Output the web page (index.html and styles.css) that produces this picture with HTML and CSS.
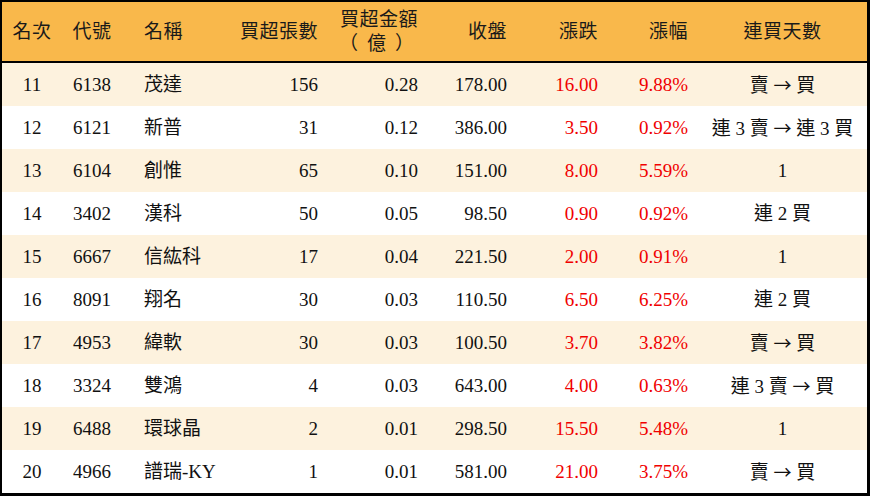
FILE: index.html
```html
<!DOCTYPE html>
<html lang="zh-Hant">
<head>
<meta charset="utf-8">
<link rel="stylesheet" href="styles.css">
</head>
<body>
<table class="rank">
  <colgroup>
    <col class="c1"><col class="c2"><col class="c3"><col class="c4"><col class="c5"><col class="c6"><col class="c7"><col class="c8"><col class="c9">
  </colgroup>
  <thead>
    <tr>
      <th class="ctr">名次</th>
      <th class="ctr">代號</th>
      <th class="lft">名稱</th>
      <th class="rgt">買超張數</th>
      <th class="rgt two">買超金額<br><span class="unit">（億）</span></th>
      <th class="rgt">收盤</th>
      <th class="rgt">漲跌</th>
      <th class="rgt">漲幅</th>
      <th class="ctr">連買天數</th>
    </tr>
  </thead>
  <tbody>
    <tr><td class="ctr">11</td><td class="ctr">6138</td><td class="lft">茂達</td><td class="rgt">156</td><td class="rgt">0.28</td><td class="rgt">178.00</td><td class="rgt up">16.00</td><td class="rgt up">9.88%</td><td class="ctr">賣 <span class="arr">→</span> 買</td></tr>
    <tr><td class="ctr">12</td><td class="ctr">6121</td><td class="lft">新普</td><td class="rgt">31</td><td class="rgt">0.12</td><td class="rgt">386.00</td><td class="rgt up">3.50</td><td class="rgt up">0.92%</td><td class="ctr">連 3 賣 <span class="arr">→</span> 連 3 買</td></tr>
    <tr><td class="ctr">13</td><td class="ctr">6104</td><td class="lft">創惟</td><td class="rgt">65</td><td class="rgt">0.10</td><td class="rgt">151.00</td><td class="rgt up">8.00</td><td class="rgt up">5.59%</td><td class="ctr">1</td></tr>
    <tr><td class="ctr">14</td><td class="ctr">3402</td><td class="lft">漢科</td><td class="rgt">50</td><td class="rgt">0.05</td><td class="rgt">98.50</td><td class="rgt up">0.90</td><td class="rgt up">0.92%</td><td class="ctr">連 2 買</td></tr>
    <tr><td class="ctr">15</td><td class="ctr">6667</td><td class="lft">信紘科</td><td class="rgt">17</td><td class="rgt">0.04</td><td class="rgt">221.50</td><td class="rgt up">2.00</td><td class="rgt up">0.91%</td><td class="ctr">1</td></tr>
    <tr><td class="ctr">16</td><td class="ctr">8091</td><td class="lft">翔名</td><td class="rgt">30</td><td class="rgt">0.03</td><td class="rgt">110.50</td><td class="rgt up">6.50</td><td class="rgt up">6.25%</td><td class="ctr">連 2 買</td></tr>
    <tr><td class="ctr">17</td><td class="ctr">4953</td><td class="lft">緯軟</td><td class="rgt">30</td><td class="rgt">0.03</td><td class="rgt">100.50</td><td class="rgt up">3.70</td><td class="rgt up">3.82%</td><td class="ctr">賣 <span class="arr">→</span> 買</td></tr>
    <tr><td class="ctr">18</td><td class="ctr">3324</td><td class="lft">雙鴻</td><td class="rgt">4</td><td class="rgt">0.03</td><td class="rgt">643.00</td><td class="rgt up">4.00</td><td class="rgt up">0.63%</td><td class="ctr">連 3 賣 <span class="arr">→</span> 買</td></tr>
    <tr><td class="ctr">19</td><td class="ctr">6488</td><td class="lft">環球晶</td><td class="rgt">2</td><td class="rgt">0.01</td><td class="rgt">298.50</td><td class="rgt up">15.50</td><td class="rgt up">5.48%</td><td class="ctr">1</td></tr>
    <tr><td class="ctr">20</td><td class="ctr">4966</td><td class="lft">譜瑞-KY</td><td class="rgt">1</td><td class="rgt">0.01</td><td class="rgt">581.00</td><td class="rgt up">21.00</td><td class="rgt up">3.75%</td><td class="ctr">賣 <span class="arr">→</span> 買</td></tr>
  </tbody>
</table>
</body>
</html>
```

FILE: styles.css
```css
html, body {
  margin: 0;
  padding: 0;
  background: #ffffff;
}

.rank {
  width: 870px;
  table-layout: fixed;
  border-collapse: separate;
  border-spacing: 0;
  border-style: solid;
  border-color: #000;
  border-width: 2px 3px 3px 2px;
  font-family: "Liberation Serif", "Noto Sans CJK TC", serif;
  font-size: 19px;
  color: #111;
}

.c1 { width: 60px; }
.c2 { width: 60px; }
.c3 { width: 106px; }
.c4 { width: 100px; }
.c5 { width: 100px; }
.c6 { width: 89px; }
.c7 { width: 91px; }
.c8 { width: 90px; }
.c9 { width: 169px; }

.rank th {
  height: 59px;
  padding: 0;
  background: #f9b84b;
  border-bottom: 2px solid #000;
  font-weight: normal;
  line-height: 22px;
  color: #1a1a1a;
  letter-spacing: 0.5px;
}

.unit {
  font-family: "Noto Sans CJK TC", sans-serif;
  font-variant-east-asian: full-width;
  letter-spacing: 9px;
  margin-right: -5px;
}

.rank td {
  height: 43px;
  padding: 0;
  line-height: 22px;
  white-space: nowrap;
}

.rank tbody tr:nth-child(odd) td {
  background: #fdf2de;
}

.arr {
  font-family: "Noto Sans CJK TC", sans-serif;
  font-size: 18px;
}

.ctr { text-align: center; }
.lft { text-align: left; padding-left: 22px !important; }
.rgt { text-align: right; padding-right: 10px !important; }

.up { color: #f00000; }
```
